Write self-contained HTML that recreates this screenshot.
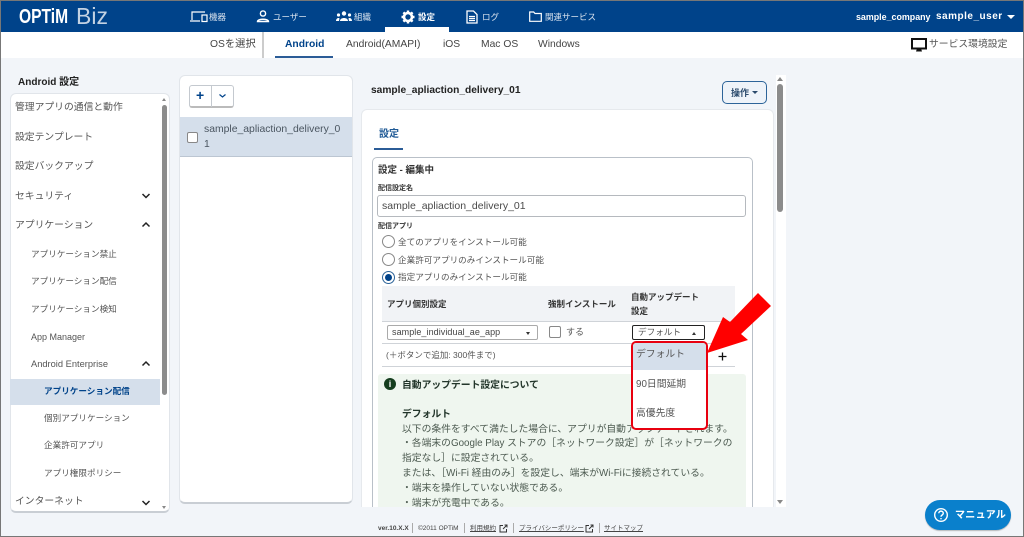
<!DOCTYPE html>
<html><head><meta charset="utf-8"><style>
*{box-sizing:border-box}
html,body{margin:0;padding:0}
body{width:1024px;height:537px;overflow:hidden;position:relative;background:#f2f5f9;font-family:"Liberation Sans","Noto Sans CJK JP",sans-serif;color:#444}
.a{position:absolute;white-space:nowrap}
.h{font-size:8.500px;color:#d8e2ee;top:11px;line-height:12px}
.s{font-size:10.300px;color:#444;top:38px;line-height:14px}
.m{font-size:9.800px;left:15px;line-height:14px;color:#555}
.m2{font-size:8.600px;left:31px;line-height:12px;color:#555}
.m3{font-size:8.600px;left:44px;line-height:12px;color:#555}
.b{font-weight:bold}
.r{width:13px;height:13px;border:1px solid #888;border-radius:50%;background:#fff;left:382px}
.rt{font-size:8.600px;left:398px;line-height:12px;color:#555}
.t{font-size:9.800px;left:402px;line-height:15px;color:#4c5a50}
.foot{font-size:6.500px;top:524px;line-height:9px;color:#444}
</style></head><body>

<!-- Header -->
<div class="a" style="left:0;top:0;width:1024px;height:32px;background:#00438a;border-top:1px solid #777"></div>
<div class="a b" style="left:19px;top:7px;font-size:20px;line-height:20px;color:#fff;transform:scaleX(.78);transform-origin:left">OPTiM</div>
<div class="a" style="left:76px;top:4px;font-size:23px;line-height:24px;color:#c3d2e3;font-weight:normal">Biz</div>

<svg class="a" style="left:190px;top:10px" width="20" height="13" viewBox="0 0 20 13" fill="none" stroke="#fff" stroke-width="1.2"><path d="M2 10V2h13M0 11h10"/><rect x="12" y="5" width="5" height="6.5"/></svg>
<div class="a h" style="left:209px">機器</div>
<svg class="a" style="left:256px;top:10px" width="14" height="13" viewBox="0 0 14 13" fill="none" stroke="#fff" stroke-width="1.4"><circle cx="7" cy="3.5" r="2.6"/><path d="M1.500 11.500c0-3 11-3 11 0z"/></svg>
<div class="a h" style="left:273px">ユーザー</div>
<svg class="a" style="left:336px;top:11px" width="16" height="10" viewBox="0 0 16 10" fill="#fff"><circle cx="8" cy="2.5" r="2.2"/><circle cx="2.5" cy="4" r="1.6"/><circle cx="13.5" cy="4" r="1.6"/><path d="M4 10c0-4 8-4 8 0zM0 10c0-3 3-3.500 3.500-2.500L3 10zM16 10c0-3-3-3.500-3.500-2.500l.5 2.500z"/></svg>
<div class="a h" style="left:354px">組織</div>
<svg class="a" style="left:401px;top:10px" width="14" height="14" viewBox="0 0 14 14"><circle cx="7" cy="7" r="4" fill="none" stroke="#fff" stroke-width="2.600"/><path d="M7 .5V3M7 11v2.500M.5 7H3M11 7h2.500M2.400 2.400l1.800 1.800M9.800 9.800l1.800 1.800M2.400 11.600l1.800-1.800M9.800 4.200l1.800-1.800" stroke="#fff" stroke-width="2.400"/></svg>
<div class="a h b" style="left:418px;color:#fff">設定</div>
<svg class="a" style="left:466px;top:10px" width="12" height="14" viewBox="0 0 12 14" fill="none" stroke="#fff" stroke-width="1.300"><path d="M1 1h6.500L11 4.500V13H1zM3 6.500h6M3 8.500h6M3 10.500h6"/></svg>
<div class="a h" style="left:482px">ログ</div>
<svg class="a" style="left:529px;top:11px" width="13" height="11" viewBox="0 0 13 11" fill="none" stroke="#fff" stroke-width="1.200"><path d="M.7 1h4l1.300 1.500h6.300v7.800H.7z"/></svg>
<div class="a h" style="left:545px">関連サービス</div>
<div class="a b" style="left:856px;top:11px;font-size:8.900px;line-height:12px;color:#fff">sample_company</div>
<div class="a b" style="left:936px;top:10px;font-size:10px;line-height:13px;color:#fff;letter-spacing:.5px">sample_user</div>
<div class="a" style="left:1007px;top:15px;border:4px solid transparent;border-top:4px solid #fff;border-bottom:0"></div>

<!-- Subnav -->
<div class="a" style="left:0;top:32px;width:1024px;height:26px;background:#fff"></div>
<div class="a" style="left:385px;top:27px;width:64px;height:5px;background:#fff"></div>
<div class="a s" style="left:210px">OSを選択</div>
<div class="a" style="left:262px;top:32px;width:1.500px;height:26px;background:#ccc"></div>
<div class="a s b" style="left:285px;color:#00438a">Android</div>
<div class="a" style="left:275px;top:56px;width:58px;height:2px;background:#2b5c97"></div>
<div class="a s" style="left:346px">Android(AMAPI)</div>
<div class="a s" style="left:443px">iOS</div>
<div class="a s" style="left:481px">Mac OS</div>
<div class="a s" style="left:538px">Windows</div>
<svg class="a" style="left:911px;top:38px" width="16" height="14" viewBox="0 0 16 14"><rect x="1" y="1" width="14" height="9.500" fill="none" stroke="#111" stroke-width="2"/><path d="M5 13.500l1-3h4l1 3z" fill="#111"/></svg>
<div class="a" style="left:929px;top:38px;font-size:9.800px;line-height:14px;color:#555">サービス環境設定</div>

<!-- Sidebar -->
<div class="a b" style="left:18px;top:76px;font-size:10px;line-height:13px;color:#222">Android 設定</div>
<div class="a" style="left:10px;top:93px;width:160px;height:420px;background:#fff;border:1px solid #e1e5ea;border-bottom:2px solid #c9ced4;border-radius:6px"></div>
<div class="a m" style="left:15px;top:101px">管理アプリの通信と動作</div>
<div class="a m" style="top:131px">設定テンプレート</div>
<div class="a m" style="top:160px">設定バックアップ</div>
<div class="a m" style="top:190px">セキュリティ</div>
<div class="a m" style="top:219px">アプリケーション</div>
<div class="a m2" style="top:248px">アプリケーション禁止</div>
<div class="a m2" style="top:275px">アプリケーション配信</div>
<div class="a m2" style="top:303px">アプリケーション検知</div>
<div class="a m2" style="top:331px;font-size:9px">App Manager</div>
<div class="a m2" style="top:358px;font-size:9.300px">Android Enterprise</div>
<div class="a" style="left:10px;top:379px;width:150px;height:26px;background:#d5dfeb"></div>
<div class="a m3 b" style="top:385px;color:#00438a">アプリケーション配信</div>
<div class="a m3" style="top:412px">個別アプリケーション</div>
<div class="a m3" style="top:439px">企業許可アプリ</div>
<div class="a m3" style="top:467px">アプリ権限ポリシー</div>
<div class="a m" style="top:495px">インターネット</div>
<svg class="a" style="left:141px;top:192px" width="10" height="8" fill="none" stroke="#222" stroke-width="1.500"><path d="M1.500 2l3.500 3.500L8.500 2"/></svg>
<svg class="a" style="left:141px;top:221px" width="10" height="8" fill="none" stroke="#222" stroke-width="1.500"><path d="M1.500 5.500L5 2l3.500 3.500"/></svg>
<svg class="a" style="left:141px;top:360px" width="10" height="8" fill="none" stroke="#222" stroke-width="1.500"><path d="M1.500 5.500L5 2l3.500 3.500"/></svg>
<svg class="a" style="left:141px;top:499px" width="10" height="8" fill="none" stroke="#222" stroke-width="1.500"><path d="M1.500 2l3.500 3.500L8.500 2"/></svg>
<div class="a" style="left:162px;top:105px;width:5px;height:290px;background:#8c8c8c;border-radius:3px"></div>
<div class="a" style="left:162px;top:98px;border:2.500px solid transparent;border-bottom:3px solid #888;border-top:0"></div>
<div class="a" style="left:162px;top:506px;border:2.500px solid transparent;border-top:3px solid #888;border-bottom:0"></div>

<!-- List card -->
<div class="a" style="left:179px;top:75px;width:174px;height:429px;background:#fff;border:1px solid #e1e5ea;border-bottom:2px solid #c9ced4;border-radius:6px"></div>
<div class="a" style="left:189px;top:85px;width:45px;height:23px;background:#fff;border:1px solid #c4c9cf;border-bottom:2px solid #bbb;border-radius:3px"></div>
<div class="a" style="left:211px;top:85px;width:1px;height:22px;background:#c4c9cf"></div>
<div class="a b" style="left:196px;top:88px;font-size:14px;line-height:15px;color:#00438a">+</div>
<svg class="a" style="left:218px;top:93px" width="9" height="6" fill="none" stroke="#00438a" stroke-width="1.200"><path d="M1.500 1.500L4.500 4l3-2.500"/></svg>
<div class="a" style="left:180px;top:117px;width:172px;height:40px;background:#d5dfeb;border-bottom:1px solid #bcc6d2"></div>
<div class="a" style="left:187px;top:132px;width:11px;height:11px;background:#fff;border:1px solid #888;border-radius:2px"></div>
<div class="a" style="left:204px;top:122px;font-size:10.400px;line-height:15px;color:#4a5560">sample_apliaction_delivery_0<br>1</div>

<!-- Main -->
<div class="a b" style="left:371px;top:84px;font-size:10.200px;line-height:14px;color:#222">sample_apliaction_delivery_01</div>
<div class="a" style="left:722px;top:81px;width:45px;height:23px;background:#eef3f9;border:1px solid #2d6499;border-radius:5px"></div>
<div class="a b" style="left:731px;top:87px;font-size:9px;line-height:12px;color:#2a4a6c">操作</div>
<div class="a" style="left:752px;top:91px;border:3px solid transparent;border-top:3px solid #2a4a6c;border-bottom:0"></div>
<div class="a" style="left:776px;top:75px;width:10px;height:432px;background:#fff"></div>
<div class="a" style="left:777px;top:84px;width:6px;height:128px;background:#8c8c8c;border-radius:3px"></div>
<div class="a" style="left:777px;top:77px;border:3px solid transparent;border-bottom:4px solid #888;border-top:0"></div>
<div class="a" style="left:777px;top:500px;border:3px solid transparent;border-top:4px solid #888;border-bottom:0"></div>

<div class="a" style="left:361px;top:109px;width:413px;height:398px;background:#fff;border:1px solid #e6e9ed;border-bottom:0;border-radius:6px 6px 0 0"></div>
<div class="a b" style="left:379px;top:128px;font-size:10px;line-height:14px;color:#1f5a96">設定</div>
<div class="a" style="left:374px;top:148px;width:29px;height:2px;background:#2b5c97"></div>

<div class="a" style="left:372px;top:157px;width:381px;height:350px;background:#fff;border:1px solid #b9c0c8;border-bottom:0;border-radius:5px 5px 0 0"></div>
<div class="a b" style="left:378px;top:164px;font-size:9.500px;line-height:13px;color:#333">設定 - 編集中</div>
<div class="a b" style="left:378px;top:184px;font-size:7px;line-height:10px;color:#333">配信設定名</div>
<div class="a" style="left:377px;top:195px;width:369px;height:22px;background:#fff;border:1px solid #b5b9be;border-radius:3px"></div>
<div class="a" style="left:382px;top:199px;font-size:10.500px;line-height:14px;color:#4a4a4a">sample_apliaction_delivery_01</div>
<div class="a b" style="left:378px;top:222px;font-size:7px;line-height:10px;color:#333">配信アプリ</div>
<div class="a r" style="top:235px"></div>
<div class="a rt" style="top:236px">全てのアプリをインストール可能</div>
<div class="a r" style="top:253px"></div>
<div class="a rt" style="top:254px">企業許可アプリのみインストール可能</div>
<div class="a r" style="top:271px;border-color:#2d6499"></div>
<div class="a" style="left:385px;top:274px;width:7px;height:7px;border-radius:50%;background:#00438a"></div>
<div class="a rt" style="top:271px">指定アプリのみインストール可能</div>

<div class="a" style="left:382px;top:286px;width:353px;height:36px;background:#f1f3f6;border-bottom:1px solid #cfd3d8"></div>
<div class="a b" style="left:387px;top:298px;font-size:8.500px;line-height:12px;color:#333">アプリ個別設定</div>
<div class="a b" style="left:548px;top:298px;font-size:8.500px;line-height:12px;color:#333">強制インストール</div>
<div class="a b" style="left:631px;top:290px;font-size:8.500px;line-height:14px;color:#333">自動アップデート<br>設定</div>
<div class="a" style="left:387px;top:325px;width:151px;height:15px;background:#fff;border:1px solid #aaa;border-radius:2px"></div>
<div class="a" style="left:392px;top:327px;font-size:9px;line-height:11px;color:#444;letter-spacing:.07px">sample_individual_ae_app</div>
<div class="a" style="left:526px;top:332px;border:2.500px solid transparent;border-top:3px solid #333;border-bottom:0"></div>
<div class="a" style="left:549px;top:326px;width:12px;height:12px;background:#fff;border:1px solid #888;border-radius:2px"></div>
<div class="a" style="left:566px;top:326px;font-size:9px;line-height:12px;color:#555">する</div>
<div class="a" style="left:632px;top:325px;width:73px;height:15px;background:#fff;border:1px solid #222;border-radius:2px"></div>
<div class="a" style="left:638px;top:327px;font-size:8.600px;line-height:11px;color:#555">デフォルト</div>
<div class="a" style="left:692px;top:332px;border:2.500px solid transparent;border-bottom:3px solid #333;border-top:0"></div>
<div class="a" style="left:382px;top:343px;width:353px;height:1px;background:#cfd3d8"></div>
<div class="a" style="left:386px;top:349px;font-size:8.500px;line-height:12px;color:#555">(＋ボタンで追加: 300件まで)</div>
<div class="a" style="left:382px;top:366px;width:353px;height:1px;background:#cfd3d8"></div>
<svg class="a" style="left:717px;top:351px" width="11" height="11" stroke="#111" stroke-width="1.300"><path d="M5.500 1.500v8M1.500 5.500h8"/></svg>

<!-- Info -->
<div class="a" style="left:378px;top:374px;width:368px;height:133px;background:#eff6ef;border-radius:3px 3px 0 0"></div>
<div class="a" style="left:384px;top:378px;width:12px;height:12px;border-radius:50%;background:#143d1e;color:#fff;font-size:9px;font-weight:bold;line-height:12px;text-align:center">i</div>
<div class="a b" style="left:402px;top:379px;font-size:9.800px;line-height:14px;color:#22352a">自動アップデート設定について</div>
<div class="a b" style="left:402px;top:408px;font-size:9.800px;line-height:14px;color:#22352a">デフォルト</div>
<div class="a t" style="top:422px">以下の条件をすべて満たした場合に、アプリが自動アップデートされます。</div>
<div class="a t" style="top:436px">・各端末のGoogle Play ストアの［ネットワーク設定］が［ネットワークの</div>
<div class="a t" style="top:451px">指定なし］に設定されている。</div>
<div class="a t" style="top:466px">または、［Wi-Fi 経由のみ］を設定し、端末がWi-Fiに接続されている。</div>
<div class="a t" style="top:481px">・端末を操作していない状態である。</div>
<div class="a t" style="top:496px;height:11px;overflow:hidden">・端末が充電中である。</div>

<!-- Dropdown -->
<div class="a" style="left:631px;top:341px;width:77px;height:89px;background:#fff;border:2px solid #e8000f;border-radius:5px;overflow:hidden"><div style="position:absolute;left:0;top:0;width:73px;height:27px;background:#d5dfeb"></div></div>
<div class="a" style="left:636px;top:348px;font-size:9.800px;line-height:14px;color:#555">デフォルト</div>
<div class="a" style="left:636px;top:378px;font-size:9.800px;line-height:14px;color:#555">90日間延期</div>
<div class="a" style="left:636px;top:407px;font-size:9.800px;line-height:14px;color:#555">高優先度</div>
<svg class="a" style="left:700px;top:288px" width="76" height="70" viewBox="700 288 76 70"><path d="M707 353L723 317 730 322 758 293 771 306 741 334 748 340z" fill="#f00"/></svg>

<!-- Footer -->
<div class="a foot b" style="left:378px">ver.10.X.X</div>
<div class="a" style="left:412px;top:523px;width:1px;height:10px;background:#aaa"></div>
<div class="a foot" style="left:418px">©2011 OPTiM</div>
<div class="a" style="left:464px;top:523px;width:1px;height:10px;background:#aaa"></div>
<div class="a foot" style="left:470px;text-decoration:underline">利用規約</div>
<svg class="a" style="left:499px;top:524px" width="9" height="9" fill="none" stroke="#333" stroke-width="1"><path d="M4 1.500H1v6.500h6.500V5M4 5l4-4M5.500 1H8v2.500"/></svg>
<div class="a" style="left:513px;top:523px;width:1px;height:10px;background:#aaa"></div>
<div class="a foot" style="left:519px;text-decoration:underline">プライバシーポリシー</div>
<svg class="a" style="left:585px;top:524px" width="9" height="9" fill="none" stroke="#333" stroke-width="1"><path d="M4 1.500H1v6.500h6.500V5M4 5l4-4M5.500 1H8v2.500"/></svg>
<div class="a" style="left:599px;top:523px;width:1px;height:10px;background:#aaa"></div>
<div class="a foot" style="left:604px;text-decoration:underline">サイトマップ</div>

<!-- Manual -->
<div class="a" style="left:925px;top:500px;width:86px;height:30px;border-radius:15px;background:#0a80cc;box-shadow:0 1px 1px rgba(0,0,0,.25)"></div>
<svg class="a" style="left:933px;top:507px" width="16" height="16" viewBox="0 0 16 16" fill="none" stroke="#fff" stroke-width="1.400"><circle cx="8" cy="8" r="6.300"/><path d="M5.800 6.300c0-3 4.500-2.800 4.500 0 0 1.700-2.300 1.700-2.300 3.400"/><path d="M8 11v1.300"/></svg>
<div class="a b" style="left:955px;top:509px;font-size:10px;line-height:14px;color:#fff;letter-spacing:.3px">マニュアル</div>

<!-- Screenshot border -->
<div class="a" style="left:0;top:0;width:1024px;height:537px;border:1px solid #777"></div>
</body></html>
